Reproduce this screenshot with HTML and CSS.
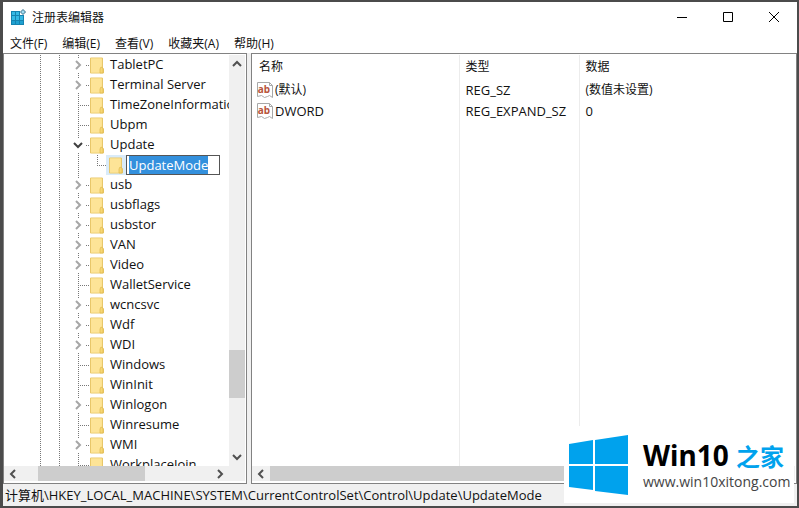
FILE: index.html
```html
<!DOCTYPE html>
<html lang="zh-CN">
<head>
  <meta charset="UTF-8">
  <meta name="viewport" content="width=device-width, initial-scale=1.0">
  <title>注册表编辑器</title>
  <link rel="stylesheet" href="styles.css">
</head>
<body>
  <svg class="defs" aria-hidden="true">
    <symbol id="folder" viewBox="0 0 14 17">
      <path d="M.5 1h12v10l1 1v4H.5z" fill="#fbe08a" stroke="#e8c76a"/>
      <path d="M1 1.500h10.500v14H1z" fill="#fde497"/>
      <path d="M10 12l1-2 2 1v5h-3z" fill="#f6d673" stroke="#dfb94f" stroke-width=".7"/>
    </symbol>
    <symbol id="chevron" viewBox="0 0 10 10">
      <path d="M3 1l4 4-4 4" fill="none" stroke="currentColor" stroke-width="2"/>
    </symbol>
    <symbol id="string-value" viewBox="0 0 16 16">
      <path d="M.5.5h12l3 3v12l-3-2-2 1-3 1-3-2-4 1z" fill="#fff" stroke="#a8a8a8"/>
      <path d="M12.500.5v3h3" fill="none" stroke="#a8a8a8"/>
      <text x="7" y="11" text-anchor="middle" class="ab">ab</text>
    </symbol>
  </svg>

  <div class="window">
    <header class="titlebar">
      <svg class="app-icon" viewBox="0 0 16 16" aria-hidden="true">
        <path d="M1 2h9v4h4v10H1z" fill="#1583b0"/>
        <path d="M2 3h3v3H2zM6 3h3v3H6zM2 7h3v4H2zM6 7h3v4H6zM10 7h3v4h-3z" fill="#35b9e4"/>
        <path d="M2 12h3v3H2zM6 12h3v3H6zM10 12h3v3h-3z" fill="#1fa0d0"/>
        <path d="M13 .5l2.500 2.500L13 5.500 10.500 3z" fill="#9fdcf2" stroke="#336b85"/>
      </svg>
      <h1>注册表编辑器</h1>
      <div class="window-buttons">
        <button aria-label="最小化"><svg viewBox="0 0 12 12"><path d="M1 6.500h10"/></svg></button>
        <button aria-label="最大化"><svg viewBox="0 0 12 12"><path d="M1.500 1.500h9v9h-9z"/></svg></button>
        <button aria-label="关闭"><svg viewBox="0 0 12 12"><path d="M1 1l10 10M11 1L1 11"/></svg></button>
      </div>
    </header>

    <nav class="menu">
      <button>文件(F)</button>
      <button>编辑(E)</button>
      <button>查看(V)</button>
      <button>收藏夹(A)</button>
      <button>帮助(H)</button>
    </nav>

    <main class="panes">
      <section class="pane tree-pane">
        <ul class="tree">
          <li class="has-keys"><button class="toggle" aria-label="展开"><svg><use href="#chevron"/></svg></button><svg class="folder"><use href="#folder"/></svg><span>TabletPC</span></li>
          <li class="has-keys"><button class="toggle" aria-label="展开"><svg><use href="#chevron"/></svg></button><svg class="folder"><use href="#folder"/></svg><span>Terminal Server</span></li>
          <li><svg class="folder"><use href="#folder"/></svg><span>TimeZoneInformatio</span></li>
          <li><svg class="folder"><use href="#folder"/></svg><span>Ubpm</span></li>
          <li class="has-keys open"><button class="toggle" aria-label="折叠"><svg><use href="#chevron"/></svg></button><svg class="folder"><use href="#folder"/></svg><span>Update</span></li>
          <li class="child"><div class="selected"><svg class="folder"><use href="#folder"/></svg></div><input class="rename" type="text" id="rename" aria-label="项名称" value="UpdateMode" spellcheck="false"></li>
          <li class="has-keys"><button class="toggle" aria-label="展开"><svg><use href="#chevron"/></svg></button><svg class="folder"><use href="#folder"/></svg><span>usb</span></li>
          <li class="has-keys"><button class="toggle" aria-label="展开"><svg><use href="#chevron"/></svg></button><svg class="folder"><use href="#folder"/></svg><span>usbflags</span></li>
          <li class="has-keys"><button class="toggle" aria-label="展开"><svg><use href="#chevron"/></svg></button><svg class="folder"><use href="#folder"/></svg><span>usbstor</span></li>
          <li class="has-keys"><button class="toggle" aria-label="展开"><svg><use href="#chevron"/></svg></button><svg class="folder"><use href="#folder"/></svg><span>VAN</span></li>
          <li class="has-keys"><button class="toggle" aria-label="展开"><svg><use href="#chevron"/></svg></button><svg class="folder"><use href="#folder"/></svg><span>Video</span></li>
          <li><svg class="folder"><use href="#folder"/></svg><span>WalletService</span></li>
          <li class="has-keys"><button class="toggle" aria-label="展开"><svg><use href="#chevron"/></svg></button><svg class="folder"><use href="#folder"/></svg><span>wcncsvc</span></li>
          <li class="has-keys"><button class="toggle" aria-label="展开"><svg><use href="#chevron"/></svg></button><svg class="folder"><use href="#folder"/></svg><span>Wdf</span></li>
          <li class="has-keys"><button class="toggle" aria-label="展开"><svg><use href="#chevron"/></svg></button><svg class="folder"><use href="#folder"/></svg><span>WDI</span></li>
          <li><svg class="folder"><use href="#folder"/></svg><span>Windows</span></li>
          <li><svg class="folder"><use href="#folder"/></svg><span>WinInit</span></li>
          <li class="has-keys"><button class="toggle" aria-label="展开"><svg><use href="#chevron"/></svg></button><svg class="folder"><use href="#folder"/></svg><span>Winlogon</span></li>
          <li><svg class="folder"><use href="#folder"/></svg><span>Winresume</span></li>
          <li class="has-keys"><button class="toggle" aria-label="展开"><svg><use href="#chevron"/></svg></button><svg class="folder"><use href="#folder"/></svg><span>WMI</span></li>
          <li><svg class="folder"><use href="#folder"/></svg><span>WorkplaceJoin</span></li>
        </ul>
        <div class="scrollbar vertical">
          <button class="up" aria-label="向上"><svg><use href="#chevron"/></svg></button>
          <div class="track"><div class="thumb"></div></div>
          <button class="down" aria-label="向下"><svg><use href="#chevron"/></svg></button>
        </div>
        <div class="scrollbar horizontal">
          <button class="left" aria-label="向左"><svg><use href="#chevron"/></svg></button>
          <div class="track"><div class="thumb"></div></div>
          <button class="right" aria-label="向右"><svg><use href="#chevron"/></svg></button>
        </div>
      </section>

      <section class="pane value-pane">
        <table class="values">
          <thead>
            <tr><th class="name">名称</th><th class="type">类型</th><th>数据</th></tr>
          </thead>
          <tbody>
            <tr><td><div class="value-name"><svg><use href="#string-value"/></svg>(默认)</div></td><td class="latin">REG_SZ</td><td>(数值未设置)</td></tr>
            <tr><td><div class="value-name latin"><svg><use href="#string-value"/></svg>DWORD</div></td><td class="latin">REG_EXPAND_SZ</td><td class="latin">0</td></tr>
            <tr class="filler"><td></td><td></td><td></td></tr>
          </tbody>
        </table>
        <div class="scrollbar horizontal">
          <button class="left" aria-label="向左"><svg><use href="#chevron"/></svg></button>
          <div class="track"><div class="thumb"></div></div>
          <button class="right" aria-label="向右"><svg><use href="#chevron"/></svg></button>
        </div>
      </section>
    </main>

    <footer class="status">计算机\HKEY_LOCAL_MACHINE\SYSTEM\CurrentControlSet\Control\Update\UpdateMode</footer>
  </div>

  <aside class="watermark">
    <svg viewBox="0 0 60 60" aria-hidden="true">
      <path d="M0 9l24-4v24H0zM26 5l33-5v29H26zM0 31h24v24l-24-3zM26 31h33v29l-33-4z" fill="#00a2ed"/>
    </svg>
    <div class="brand">
      <strong>Win10 <em>之家</em></strong>
      <span>www.win10xitong.com</span>
    </div>
  </aside>

  <script>
    // start in rename mode with the whole key name selected
    const rename = document.getElementById('rename');
    rename.focus();
    rename.select();
  </script>
</body>
</html>
```

FILE: styles.css
```css
:root {
  --frame: #4b4b4b;
  --line: #828282;
  --bar: #f0f0f0;
  --thumb: #cdcdcd;
  --dots: #777;
}
* {
  box-sizing: border-box;
}
body {
  margin: 0;
  height: 100vh;
  overflow: hidden;
  font-family: "Open Sans", "Noto Sans CJK SC", sans-serif;
  font-size: 12px;
  color: #111;
}
button {
  border: none;
  background: none;
  padding: 0;
  font: inherit;
  color: inherit;
}
ul {
  list-style: none;
  margin: 0;
  padding: 0;
}
.defs {
  position: absolute;
  width: 0;
  height: 0;
}
.ab {
  font: bold 10px "Noto Sans", sans-serif;
  fill: #b8553c;
}
.window {
  display: flex;
  flex-direction: column;
  height: 100%;
  background: #fff;
  border: 2px solid var(--frame);
  border-left-width: 3px;
}

/* title bar and menu */
.titlebar {
  display: flex;
  align-items: center;
  height: 30px;
  padding-left: 7px;
  flex: none;
}
.app-icon {
  width: 16px;
  height: 16px;
}
h1 {
  margin: 0 auto 0 6px;
  font-size: 12px;
  font-weight: normal;
}
.window-buttons {
  display: flex;
}
.window-buttons button {
  width: 46px;
  height: 30px;
  display: grid;
  place-items: center;
}
.window-buttons svg {
  width: 12px;
  height: 12px;
  fill: none;
  stroke: #000;
}
.menu {
  display: flex;
  gap: 15px;
  height: 21px;
  padding-left: 7px;
  flex: none;
}

/* panes */
.panes {
  flex: 1;
  min-height: 0;
  display: grid;
  grid-template-columns: 244px 1fr;
  gap: 4px;
  background: var(--bar);
}
.pane {
  display: grid;
  min-width: 0;
  min-height: 0;
  padding: 1px 1px 2px 0;
  background: #fff;
  border: 1px solid var(--line);
}
.tree-pane {
  grid-template: minmax(0, 1fr) 15px / minmax(0, 1fr) 16px;
}
.value-pane {
  grid-template: minmax(0, 1fr) 15px / minmax(0, 1fr);
}

/* dotted guides of the two outer levels run the full height */
.tree {
  overflow: hidden;
  padding-left: 64px;
  background:
    repeating-linear-gradient(var(--dots) 0 1px, transparent 1px 2px) 36px 0 / 1px 100% no-repeat,
    repeating-linear-gradient(var(--dots) 0 1px, transparent 1px 2px) 55px 0 / 1px 100% no-repeat;
}
.tree li {
  display: flex;
  align-items: center;
  height: 20px;
  padding-left: 22px;
  white-space: nowrap;
  font-size: 13px;
  line-height: 18px;
  background:
    repeating-linear-gradient(var(--dots) 0 1px, transparent 1px 2px) 10px 0 / 1px 100% no-repeat,
    repeating-linear-gradient(90deg, var(--dots) 0 1px, transparent 1px 2px) 12px 10px / 10px 1px no-repeat;
}
.tree li > span {
  padding-bottom: 2px;
}
.tree .has-keys {
  padding-left: 3px;
}
.toggle {
  width: 14px;
  height: 14px;
  margin-right: 5px;
  display: grid;
  place-items: center;
  background: #fff;
  color: #a6a6a6;
}
.toggle svg,
.scrollbar svg {
  width: 10px;
  height: 10px;
}
.open .toggle {
  color: #404040;
}
.open .toggle svg {
  transform: rotate(90deg);
}
.folder {
  width: 14px;
  height: 17px;
  margin-right: 6px;
  flex: none;
}
.tree .child {
  padding-left: 38px;
  background:
    repeating-linear-gradient(var(--dots) 0 1px, transparent 1px 2px) 10px 0 / 1px 100% no-repeat,
    repeating-linear-gradient(var(--dots) 0 1px, transparent 1px 2px) 29px 0 / 1px 10px no-repeat,
    repeating-linear-gradient(90deg, var(--dots) 0 1px, transparent 1px 2px) 29px 10px / 10px 1px no-repeat;
}
.selected {
  display: flex;
  align-items: center;
  height: 20px;
  padding-left: 3px;
  background: #d9ebf9;
}
.selected .folder {
  margin-right: 3px;
}
.rename {
  width: 94px;
  height: 20px;
  padding: 0 0 1px 2px;
  font: inherit;
  color: #111;
  border: 1px solid #555;
  border-radius: 0;
  outline: none;
  background: #fff;
}
.rename::selection {
  background: #3390dd;
  color: #fff;
}

/* scrollbars */
.scrollbar {
  display: flex;
  background: var(--bar);
  color: #505050;
  grid-column: 1 / -1;
}
.scrollbar button {
  width: 18px;
  flex: none;
  display: grid;
  place-items: center;
}
.scrollbar .track {
  flex: 1;
  display: flex;
}
.scrollbar .thumb {
  background: var(--thumb);
}
.vertical {
  flex-direction: column;
  grid-column: 2;
}
.vertical button {
  width: 100%;
  height: 18px;
}
.vertical .track {
  flex-direction: column;
  justify-content: flex-end;
  padding-bottom: 50px;
}
.vertical .thumb {
  height: 48px;
}
.tree-pane .horizontal {
  padding-right: 16px;
}
.tree-pane .horizontal .thumb {
  width: 107px;
  margin-left: 16px;
}
.value-pane .thumb {
  flex: 1;
}
.left svg {
  transform: rotate(180deg);
}
.up svg {
  transform: rotate(-90deg);
}
.down svg {
  transform: rotate(90deg);
}

/* value list */
.values {
  width: 100%;
  height: 100%;
  table-layout: fixed;
  border-collapse: collapse;
}
th,
td {
  height: 21px;
  padding: 0 6px;
  text-align: left;
  font-weight: normal;
  line-height: 20px;
  border-right: 1px solid #ececec;
}
th {
  height: 24px;
}
th:first-child {
  padding-left: 7px;
}
td:first-child {
  padding-left: 5px;
}
th:last-child,
td:last-child {
  border-right: none;
}
.name {
  width: 207px;
}
.type {
  width: 120px;
}
.filler td {
  height: auto;
}
.latin {
  font-size: 13px;
}
.value-name {
  display: flex;
  align-items: center;
  gap: 2px;
}
.value-name svg {
  width: 16px;
  height: 16px;
}

.status {
  flex: none;
  height: 22px;
  padding-left: 2px;
  font-size: 13px;
  line-height: 22px;
  background: var(--bar);
  white-space: nowrap;
}

/* site badge over the corner of the window */
.watermark {
  position: absolute;
  right: 5px;
  bottom: 5px;
  width: 230px;
  height: 77px;
  display: flex;
  align-items: center;
  gap: 14px;
  padding-left: 5px;
  background: #fff;
}
.watermark svg {
  width: 60px;
  height: 60px;
}
.brand {
  display: flex;
  flex-direction: column;
}
.brand strong {
  font-family: "Noto Sans", "Noto Sans CJK SC", sans-serif;
  font-size: 28px;
  line-height: 32px;
  color: #000;
  white-space: nowrap;
}
.brand em {
  font-style: normal;
  font-size: 24px;
  color: #00a2ed;
}
.brand span {
  font-size: 14px;
  line-height: 18px;
  color: #444;
}
```
